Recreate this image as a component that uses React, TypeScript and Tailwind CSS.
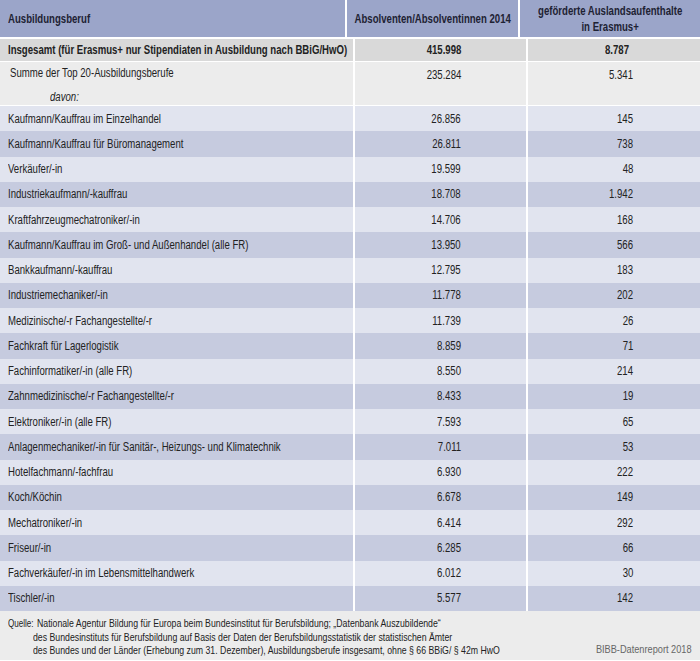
import type { ReactNode } from 'react'

const rows: [string, string, string][] = [
  ['Kaufmann/Kauffrau im Einzelhandel', '26.856', '145'],
  ['Kaufmann/Kauffrau für Büromanagement', '26.811', '738'],
  ['Verkäufer/-in', '19.599', '48'],
  ['Industriekaufmann/-kauffrau', '18.708', '1.942'],
  ['Kraftfahrzeugmechatroniker/-in', '14.706', '168'],
  ['Kaufmann/Kauffrau im Groß- und Außenhandel (alle FR)', '13.950', '566'],
  ['Bankkaufmann/-kauffrau', '12.795', '183'],
  ['Industriemechaniker/-in', '11.778', '202'],
  ['Medizinische/-r Fachangestellte/-r', '11.739', '26'],
  ['Fachkraft für Lagerlogistik', '8.859', '71'],
  ['Fachinformatiker/-in (alle FR)', '8.550', '214'],
  ['Zahnmedizinische/-r Fachangestellte/-r', '8.433', '19'],
  ['Elektroniker/-in (alle FR)', '7.593', '65'],
  ['Anlagenmechaniker/-in für Sanitär-, Heizungs- und Klimatechnik', '7.011', '53'],
  ['Hotelfachmann/-fachfrau', '6.930', '222'],
  ['Koch/Köchin', '6.678', '149'],
  ['Mechatroniker/-in', '6.414', '292'],
  ['Friseur/-in', '6.285', '66'],
  ['Fachverkäufer/-in im Lebensmittelhandwerk', '6.012', '30'],
  ['Tischler/-in', '5.577', '142'],
]

// condensed look: the reference uses a narrow face, Liberation Sans squeezed horizontally
function L({ children }: { children: ReactNode }) {
  return <span className="inline-block whitespace-nowrap scale-x-[0.8] origin-left">{children}</span>
}
function M({ children }: { children: ReactNode }) {
  return <span className="inline-block whitespace-nowrap scale-x-[0.8] origin-center text-center">{children}</span>
}
function R({ children }: { children: ReactNode }) {
  return <span className="inline-block whitespace-nowrap scale-x-[0.8] origin-right">{children}</span>
}
function F({ children }: { children: ReactNode }) {
  return <span className="inline-block whitespace-nowrap scale-x-[0.76] origin-left">{children}</span>
}

export default function App() {
  return (
    <div className="w-[700px] h-[661px] bg-white text-[12px] text-[#222] overflow-hidden font-['Liberation_Sans',Arial,sans-serif]">
      {/* Header */}
      <div className="flex h-[37px] bg-[#9ba5c9] font-bold text-[#1e2233]">
        <div className="w-[353px] flex items-center pl-2"><L>Ausbildungsberuf</L></div>
        <div className="w-[173px] border-l-2 border-white flex items-center justify-center"><M>Absolventen/Absolventinnen 2014</M></div>
        <div className="flex-1 border-l-2 border-white flex items-center justify-center leading-[16px]">
          <M>geförderte Auslandsaufenthalte<br />in Erasmus+</M>
        </div>
      </div>

      {/* Insgesamt */}
      <div className="flex h-[22px] mt-[2px] bg-[#d9d9d9] font-bold">
        <div className="w-[353px] flex items-center pl-2"><L>Insgesamt (für Erasmus+ nur Stipendiaten in Ausbildung nach BBiG/HwO)</L></div>
        <div className="w-[173px] border-l-2 border-white flex items-center justify-end pr-[65px]"><R>415.998</R></div>
        <div className="flex-1 border-l-2 border-white flex items-center justify-end pr-[71px]"><R>8.787</R></div>
      </div>

      {/* Summe + davon */}
      <div className="flex h-[43px] mt-px bg-[#ececec]">
        <div className="w-[353px] flex flex-col pl-[10px]">
          <div className="h-[22px] flex items-center"><L>Summe der Top 20-Ausbildungsberufe</L></div>
          <div className="h-[21px] flex items-center pl-10 pt-[4px] italic"><L>davon:</L></div>
        </div>
        <div className="w-[173px] border-l-2 border-white flex justify-end pr-[65px] pt-[4px]"><R>235.284</R></div>
        <div className="flex-1 border-l-2 border-white flex justify-end pr-[67px] pt-[4px]"><R>5.341</R></div>
      </div>

      {/* Data rows */}
      <div className="mt-px">
        {rows.map(([name, a, b], i) => (
          <div key={name} className={`flex h-[25.25px] ${i % 2 === 0 ? 'bg-[#e1e4ef]' : 'bg-[#c6cbdf]'}`}>
            <div className="w-[353px] flex items-center pl-2"><L>{name}</L></div>
            <div className="w-[173px] border-l-2 border-white flex items-center justify-end pr-[65px]"><R>{a}</R></div>
            <div className="flex-1 border-l-2 border-white flex items-center justify-end pr-[67px]"><R>{b}</R></div>
          </div>
        ))}
      </div>

      {/* Footer */}
      <div className="bg-[#ececec] h-[49px] flex text-[11.5px] leading-[13.5px] pt-[6px] pl-2 pr-2">
        <div className="w-[25px] shrink-0">
          <span className="inline-block whitespace-nowrap scale-x-[0.7] origin-left">Quelle:</span>
        </div>
        <div className="flex-1 min-w-0 flex flex-col">
          <span className="pl-[4px]"><F>Nationale Agentur Bildung für Europa beim Bundesinstitut für Berufsbildung; „Datenbank Auszubildende“</F></span>
          <F>des Bundesinstituts für Berufsbildung auf Basis der Daten der Berufsbildungsstatistik der statistischen Ämter</F>
          <F>des Bundes und der Länder (Erhebung zum 31. Dezember), Ausbildungsberufe insgesamt, ohne § 66 BBiG/ § 42m HwO</F>
        </div>
        <div className="shrink-0 w-[96px] self-end pb-[4px] text-[#666] text-[11.5px] flex justify-end">
          <span className="inline-block whitespace-nowrap scale-x-[0.8] origin-right">BIBB-Datenreport 2018</span>
        </div>
      </div>
    </div>
  )
}
